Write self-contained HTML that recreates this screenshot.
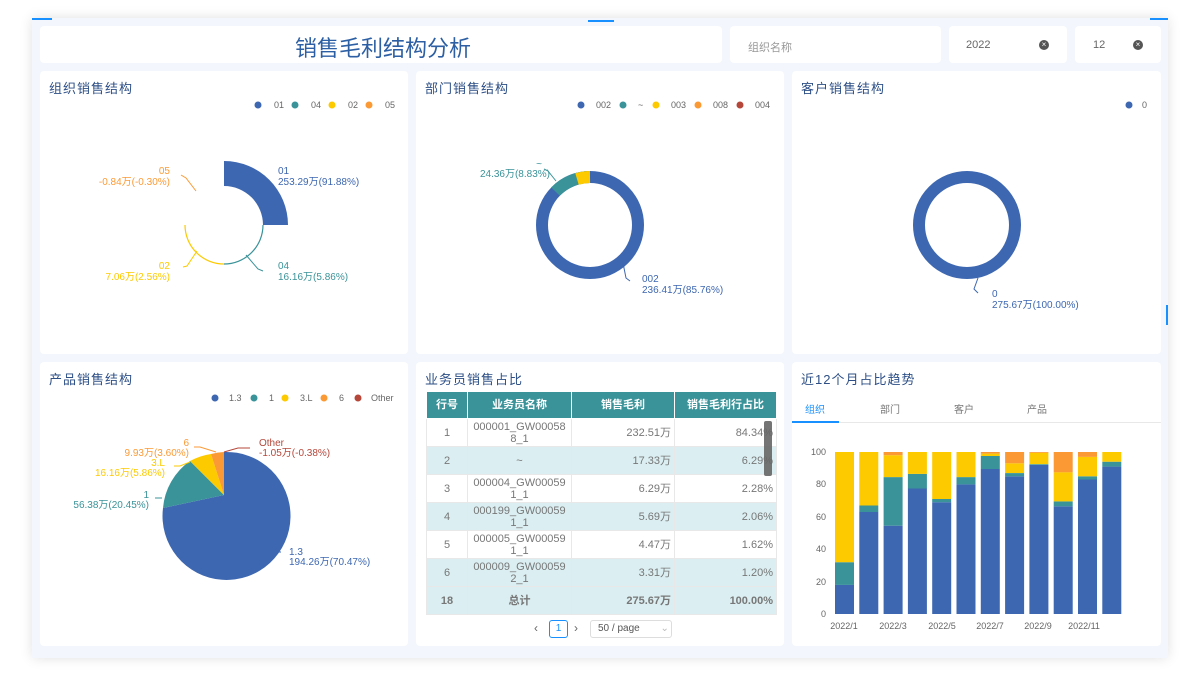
<!DOCTYPE html>
<html><head><meta charset="utf-8"><style>
*{margin:0;padding:0;box-sizing:border-box}
body{width:1200px;height:675px;background:#fff;font-family:"Liberation Sans","Noto Sans CJK SC",sans-serif;position:relative;overflow:hidden}
.frame{position:absolute;left:32px;top:18px;width:1136px;height:640px;background:#f3f6fc;box-shadow:0 0 12px rgba(0,0,0,.12)}
.box{position:absolute;background:#fff;border-radius:4px}
.pt{position:absolute;left:9px;top:7px;font-size:13px;color:#2d4f86;letter-spacing:1px}
.bar{position:absolute;background:#1890ff;height:2px}
svg text{font-family:"Liberation Sans","Noto Sans CJK SC",sans-serif}
table{border-collapse:collapse;font-size:11px;color:#777;table-layout:fixed}
td,th{border:1px solid #e8e8e8;height:28px;padding:0 3px;line-height:12px}
th{background:#3a9399;color:#fff;font-weight:bold;border-color:#fff;height:27px}
tr.a td{background:#dbeef1}
</style></head><body>
<div class="frame"></div>
<div class="bar" style="left:32px;top:18px;width:20px"></div>
<div class="bar" style="left:588px;top:20px;width:26px"></div>
<div class="bar" style="left:1150px;top:18px;width:18px"></div>
<div class="bar" style="left:1166px;top:305px;width:2px;height:20px"></div>

<div class="box" style="left:40px;top:26px;width:682px;height:37px"><div style="position:absolute;left:255px;top:5px;font-size:22px;color:#2c5fa3">销售毛利结构分析</div></div>
<div class="box" style="left:730px;top:26px;width:211px;height:37px"><div style="position:absolute;left:18px;top:13px;font-size:11px;color:#999">组织名称</div></div>
<div class="box" style="left:949px;top:26px;width:118px;height:37px"><div style="position:absolute;left:17px;top:13px;font-size:11px;color:#666">2022</div><div style="position:absolute;left:90px;top:14px;width:10px;height:10px;border-radius:50%;background:#555;color:#fff;font-size:8px;line-height:10px;text-align:center">×</div></div>
<div class="box" style="left:1075px;top:26px;width:86px;height:37px"><div style="position:absolute;left:18px;top:13px;font-size:11px;color:#666">12</div><div style="position:absolute;left:58px;top:14px;width:10px;height:10px;border-radius:50%;background:#555;color:#fff;font-size:8px;line-height:10px;text-align:center">×</div></div>

<div class="box" style="left:40px;top:71px;width:368px;height:283px"><div class="pt">组织销售结构</div>
<svg width="368" height="283" style="position:absolute;left:0;top:0" font-size="10">
<g font-size="9" fill="#666"><circle cx="218" cy="34" r="3.5" fill="#3d67b1"/><text x="234" y="37">01</text><circle cx="255" cy="34" r="3.5" fill="#3a9399"/><text x="271" y="37">04</text><circle cx="292" cy="34" r="3.5" fill="#fdca00"/><text x="308" y="37">02</text><circle cx="329" cy="34" r="3.5" fill="#fb9a35"/><text x="345" y="37">05</text></g>
<path d="M184,90 A64,64 0 0 1 248,154 L223,154 A39,39 0 0 0 184,115 Z" fill="#3d67b1"/>
<path d="M223,154 A39,39 0 0 1 184,193" fill="none" stroke="#3a9399" stroke-width="1.2"/>
<path d="M184,193 A39,39 0 0 1 145,154" fill="none" stroke="#fdca00" stroke-width="1.2"/>
<polyline points="156,120 146,107 141,104" fill="none" stroke="#fb9a35"/>
<polyline points="206,184 218,198 223,200" fill="none" stroke="#3a9399"/>
<polyline points="157,180 147,195 143,196" fill="none" stroke="#fdca00"/>
<text x="238" y="103" fill="#3d67b1">01</text><text x="238" y="114" fill="#3d67b1">253.29万(91.88%)</text>
<text x="238" y="198" fill="#3a9399">04</text><text x="238" y="209" fill="#3a9399">16.16万(5.86%)</text>
<text x="130" y="198" fill="#fdca00" text-anchor="end">02</text><text x="130" y="209" fill="#fdca00" text-anchor="end">7.06万(2.56%)</text>
<text x="130" y="103" fill="#fb9a35" text-anchor="end">05</text><text x="130" y="114" fill="#fb9a35" text-anchor="end">-0.84万(-0.30%)</text>
</svg></div>

<div class="box" style="left:416px;top:71px;width:368px;height:283px"><div class="pt">部门销售结构</div>
<svg width="368" height="283" style="position:absolute;left:0;top:0" font-size="10">
<g font-size="9" fill="#666"><circle cx="165" cy="34" r="3.5" fill="#3d67b1"/><text x="180" y="37">002</text><circle cx="207" cy="34" r="3.5" fill="#3a9399"/><text x="222" y="37">~</text><circle cx="240" cy="34" r="3.5" fill="#fdca00"/><text x="255" y="37">003</text><circle cx="282" cy="34" r="3.5" fill="#fb9a35"/><text x="297" y="37">008</text><circle cx="324" cy="34" r="3.5" fill="#b5473a"/><text x="339" y="37">004</text></g>
<circle cx="174" cy="154" r="48" fill="none" stroke="#3d67b1" stroke-width="12"/>
<path d="M139.5,120.6 A48,48 0 0 1 174,106" fill="none" stroke="#3a9399" stroke-width="12"/>
<path d="M161,108 A48,48 0 0 1 174,106" fill="none" stroke="#fdca00" stroke-width="12"/>
<polyline points="140,110 132,100 128,98" fill="none" stroke="#3a9399"/>
<polyline points="207,192 210,207 214,210" fill="none" stroke="#3d67b1"/>
<text x="126" y="96" fill="#3a9399" text-anchor="end">~</text><text x="134" y="106" fill="#3a9399" text-anchor="end">24.36万(8.83%)</text>
<text x="226" y="211" fill="#3d67b1">002</text><text x="226" y="222" fill="#3d67b1">236.41万(85.76%)</text>
</svg></div>

<div class="box" style="left:792px;top:71px;width:369px;height:283px"><div class="pt">客户销售结构</div>
<svg width="369" height="283" style="position:absolute;left:0;top:0" font-size="10">
<circle cx="337" cy="34" r="3.5" fill="#3d67b1"/><text x="350" y="37" font-size="9" fill="#666">0</text>
<circle cx="175" cy="154" r="48" fill="none" stroke="#3d67b1" stroke-width="12"/>
<polyline points="186,207 182,218 186,222" fill="none" stroke="#3d67b1"/>
<text x="200" y="226" fill="#3d67b1">0</text><text x="200" y="237" fill="#3d67b1">275.67万(100.00%)</text>
</svg></div>

<div class="box" style="left:40px;top:362px;width:368px;height:284px"><div class="pt">产品销售结构</div>
<svg width="368" height="284" style="position:absolute;left:0;top:0" font-size="10">
<g font-size="9" fill="#666"><circle cx="175" cy="36" r="3.5" fill="#3d67b1"/><text x="189" y="39">1.3</text><circle cx="214" cy="36" r="3.5" fill="#3a9399"/><text x="229" y="39">1</text><circle cx="245" cy="36" r="3.5" fill="#fdca00"/><text x="260" y="39">3.L</text><circle cx="284" cy="36" r="3.5" fill="#fb9a35"/><text x="299" y="39">6</text><circle cx="318" cy="36" r="3.5" fill="#b5473a"/><text x="331" y="39">Other</text></g>
<path d="M184,133 L184,90 A64,64 0 1 1 123,146 Z" fill="#3d67b1"/>
<path d="M184,133 L123,146 A64,64 0 0 1 150,99 Z" fill="#3a9399"/>
<path d="M184,133 L150,99 A64,64 0 0 1 171,92 Z" fill="#fdca00"/>
<path d="M184,133 L171,92 A64,64 0 0 1 184,90 Z" fill="#fb9a35"/>
<polyline points="184,90 198,86 210,86" fill="none" stroke="#b5473a"/>
<polyline points="176,90 160,85 154,85" fill="none" stroke="#fb9a35"/>
<polyline points="150,100 140,104 134,104" fill="none" stroke="#fdca00"/>
<polyline points="122,136 115,136" fill="none" stroke="#3a9399"/>
<polyline points="236,190 241,190" fill="none" stroke="#3d67b1"/>
<text x="219" y="84" fill="#b5473a">Other</text><text x="219" y="94" fill="#b5473a">-1.05万(-0.38%)</text>
<text x="149" y="84" fill="#fb9a35" text-anchor="end">6</text><text x="149" y="94" fill="#fb9a35" text-anchor="end">9.93万(3.60%)</text>
<text x="125" y="104" fill="#fdca00" text-anchor="end">3.L</text><text x="125" y="114" fill="#fdca00" text-anchor="end">16.16万(5.86%)</text>
<text x="109" y="136" fill="#3a9399" text-anchor="end">1</text><text x="109" y="146" fill="#3a9399" text-anchor="end">56.38万(20.45%)</text>
<text x="249" y="193" fill="#3d67b1">1.3</text><text x="249" y="203" fill="#3d67b1">194.26万(70.47%)</text>
</svg></div>

<div class="box" style="left:416px;top:362px;width:368px;height:284px"><div class="pt">业务员销售占比</div>
<table style="position:absolute;left:10px;top:29px;width:350px">
<colgroup><col style="width:41px"><col style="width:104px"><col style="width:103px"><col style="width:102px"></colgroup>
<tr><th>行号</th><th>业务员名称</th><th>销售毛利</th><th>销售毛利行占比</th></tr>
<tr><td align="center">1</td><td align="center">000001_GW00058<br>8_1</td><td align="right">232.51万</td><td align="right">84.34%</td></tr>
<tr class="a"><td align="center">2</td><td align="center">~</td><td align="right">17.33万</td><td align="right">6.29%</td></tr>
<tr><td align="center">3</td><td align="center">000004_GW00059<br>1_1</td><td align="right">6.29万</td><td align="right">2.28%</td></tr>
<tr class="a"><td align="center">4</td><td align="center">000199_GW00059<br>1_1</td><td align="right">5.69万</td><td align="right">2.06%</td></tr>
<tr><td align="center">5</td><td align="center">000005_GW00059<br>1_1</td><td align="right">4.47万</td><td align="right">1.62%</td></tr>
<tr class="a"><td align="center">6</td><td align="center">000009_GW00059<br>2_1</td><td align="right">3.31万</td><td align="right">1.20%</td></tr>
<tr class="a" style="font-weight:bold"><td align="center" style="height:25px">18</td><td align="center">总计</td><td align="right">275.67万</td><td align="right">100.00%</td></tr>
</table>
<div style="position:absolute;left:348px;top:59px;width:8px;height:55px;background:#666;border-radius:2px;opacity:.9"></div>
<div style="position:absolute;left:118px;top:259px;font-size:12px;color:#666">‹</div>
<div style="position:absolute;left:133px;top:258px;width:19px;height:18px;border:1px solid #1890ff;border-radius:3px;font-size:10px;color:#1890ff;text-align:center;line-height:16px">1</div>
<div style="position:absolute;left:158px;top:259px;font-size:12px;color:#666">›</div>
<div style="position:absolute;left:174px;top:258px;width:82px;height:18px;border:1px solid #ddd;border-radius:3px;font-size:10px;color:#555;padding-left:7px;line-height:16px">50 / page <span style="color:#bbb;margin-left:18px">⌄</span></div>
</div>

<div class="box" style="left:792px;top:362px;width:369px;height:284px"><div class="pt">近12个月占比趋势</div>
<div style="position:absolute;left:0;top:60px;width:369px;height:1px;background:#e8e8e8"></div>
<div style="position:absolute;left:0;top:59px;width:47px;height:2px;background:#1890ff"></div>
<div style="position:absolute;top:39px;left:13px;font-size:10px;color:#1890ff">组织</div>
<div style="position:absolute;top:39px;left:88px;font-size:10px;color:#777">部门</div>
<div style="position:absolute;top:39px;left:162px;font-size:10px;color:#777">客户</div>
<div style="position:absolute;top:39px;left:235px;font-size:10px;color:#777">产品</div>
<svg id="bc" width="369" height="284" style="position:absolute;left:0;top:0" font-size="9" fill="#666">
<g text-anchor="end"><text x="34" y="255">0</text><text x="34" y="223">20</text><text x="34" y="190">40</text><text x="34" y="158">60</text><text x="34" y="125">80</text><text x="34" y="93">100</text></g>
<g text-anchor="middle"><text x="52" y="267">2022/1</text><text x="101" y="267">2022/3</text><text x="150" y="267">2022/5</text><text x="198" y="267">2022/7</text><text x="246" y="267">2022/9</text><text x="292" y="267">2022/11</text></g>
<g id="bars"></g>
</svg>
</div>
<script>
var d=[[18,14,68,0],[63,4,33,0],[54.5,30,13.5,2],[77.5,9,13.5,0],[69,2,29,0],[80,4.5,15.5,0],[89.5,8,1.5,1],[85,2,6,7],[92,.5,7,.5],[66.5,3,18,12.5],[83,2,12,3],[91,3,6,0]];
var c=["#3d67b1","#3a9399","#fdca00","#fb9a35"],s="";
d.forEach(function(r,i){var x=43+i*24.3,b=252;r.forEach(function(v,j){var h=v*1.62;b-=h;s+='<rect x="'+x.toFixed(1)+'" y="'+b.toFixed(1)+'" width="19" height="'+h.toFixed(1)+'" fill="'+c[j]+'"/>';});});
document.getElementById("bars").innerHTML=s;
</script>
</body></html>
